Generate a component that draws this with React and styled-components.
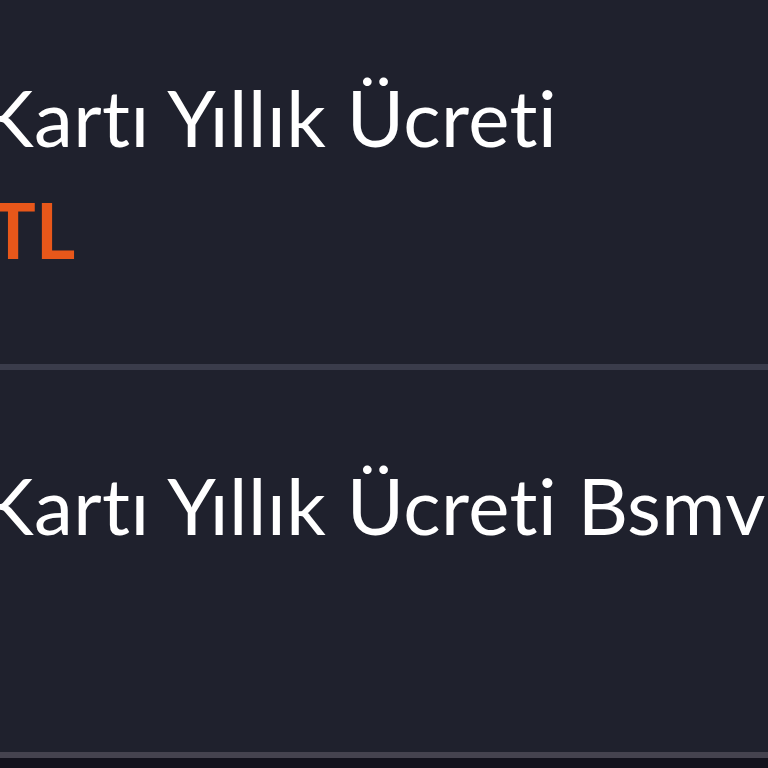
import styled, { createGlobalStyle } from "styled-components";

const Global = createGlobalStyle`
  html, body {
    margin: 0;
    padding: 0;
    background: #1f212d;
    overflow: hidden;
  }
  #root {
    width: 768px;
    height: 768px;
  }
`;

// Page
const Page = styled.div`
  width: 768px;
  height: 768px;
  background: #1f212d;
  overflow: hidden;
  display: flex;
  flex-direction: column;
  font-family: "Lato", "Noto Sans", sans-serif;
`;

// One fee row
const Row = styled.div`
  height: ${(p) => p.h}px;
  flex-shrink: 0;
  padding-top: ${(p) => p.top}px;
  box-sizing: border-box;
  border-bottom: 6px solid ${(p) => p.line};
  margin-left: -18px;
  white-space: nowrap;
`;

const Title = styled.div`
  color: #ffffff;
  font-size: 78px;
  line-height: 1;
  font-weight: 400;
  letter-spacing: 0.5px;
`;

const Amount = styled.div`
  color: #e8571a;
  font-size: 76px;
  line-height: 1;
  font-weight: 700;
  margin-top: 36px;
  margin-left: -52px;
`;

const Bottom = styled.div`
  flex: 1;
  background: #13121d;
`;

export default function App() {
  return (
    <>
      <Global />
      <Page>
        <Row h={370} top={78} line="#3a3c4b">
          <Title>Kartı Yıllık Ücreti</Title>
          <Amount>0 TL</Amount>
        </Row>
        <Row h={388} top={96} line="#45434f">
          <Title>Kartı Yıllık Ücreti Bsmv</Title>
        </Row>
        <Bottom />
      </Page>
    </>
  );
}
